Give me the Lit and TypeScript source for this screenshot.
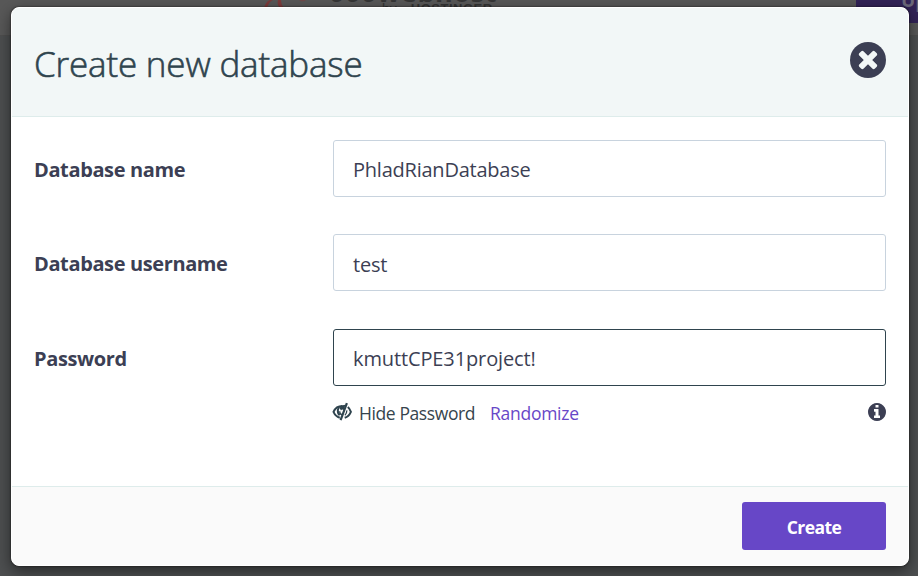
import { LitElement, html, css } from "lit";
import { customElement } from "lit/decorators.js";

@customElement("app-root")
export class AppRoot extends LitElement {
  static styles = css`
    :host {
      display: block;
      position: relative;
      width: 918px;
      height: 576px;
      overflow: hidden;
      background: #4d4f50;
      font-family: "Open Sans", "Noto Sans", sans-serif;
      color: #36444d;
    }
    * { box-sizing: border-box; }
    .topbar {
      height: 36px;
      display: flex;
      justify-content: space-between;
      background: #585858;
      border-bottom: 1px solid #4e4e4e;
    }
    .brand { display: flex; margin-left: 264px; }
    .flame { display: block; width: 60px; height: 8px; }
    .words { position: relative; width: 200px; height: 8px; overflow: hidden; }
    .host {
      position: absolute; left: 5px; top: -24px;
      font: 700 27px/32px "Open Sans", sans-serif;
      letter-spacing: 0.6px;
      color: #363636;
      white-space: nowrap;
    }
    .by {
      position: absolute; left: 58px; top: 2px;
      display: flex;
      gap: 14px;
      font: 400 14px/14px "Liberation Sans", sans-serif;
      color: #333;
      white-space: nowrap;
    }
    .by b { font-size: 13px; letter-spacing: 0.5px; }
    .upgrade {
      width: 62px; height: 23px;
      overflow: hidden;
      background: #322357;
      color: #6b687a;
      font: 700 19px/20px "Open Sans", sans-serif;
      padding-left: 45px;
      white-space: nowrap;
    }
    .upgrade span { display: block; margin-top: -10px; }
    .modal {
      position: absolute;
      left: 11px; top: 7px;
      width: 898px; height: 559px;
      display: flex;
      flex-direction: column;
      border: 1px solid #fff;
      border-radius: 8px;
      background: #fff;
      overflow: hidden;
      box-shadow: 0 0 2px rgba(0, 0, 0, 0.7), 0 5px 15px rgba(0, 0, 0, 0.5);
    }
    header {
      height: 109px;
      flex: none;
      display: flex;
      justify-content: space-between;
      align-items: flex-start;
      padding: 34px 22px 0 22px;
      background: #f2f7f7;
      border-bottom: 1px solid #deeceb;
      border-radius: 7px 7px 0 0;
    }
    h1 {
      margin: -1px 0 0;
      font-size: 35px;
      line-height: 46px;
      font-weight: 300;
      letter-spacing: -0.18px;
      color: #2f444e;
      -webkit-text-stroke: 0.6px #2f444e;
      white-space: nowrap;
    }
    .close { display: block; width: 36px; height: 36px; }
    main { flex: 1; padding: 23px 22px 0; }
    .row {
      display: grid;
      grid-template-columns: 299px 553px;
      align-items: center;
      height: 57px;
      margin-bottom: 37px;
    }
    .row.second { margin-bottom: 38px; }
    .row.third { margin-bottom: 0; }
    label {
      font-size: 20px;
      line-height: 28px;
      font-weight: 700;
      letter-spacing: -0.38px;
      color: #3c3f54;
      white-space: nowrap;
      padding-top: 3px;
    }
    .field {
      height: 57px;
      border: 1px solid #c8d3de;
      border-radius: 3px;
      padding: 2px 19px 0;
      font-size: 20px;
      line-height: 54px;
      letter-spacing: -0.23px;
      color: #3c3f54;
      white-space: nowrap;
    }
    .second .field { padding-top: 3px; }
    .field.active { border-color: #2f444e; letter-spacing: -0.12px; }
    .tools {
      display: flex;
      align-items: center;
      margin-left: 298px;
      height: 24px;
      margin-top: 15px;
      font-size: 17.5px;
      line-height: 24px;
      letter-spacing: -0.4px;
      white-space: nowrap;
    }
    .eye { width: 20px; height: 20px; margin: -3px 7px 0 0; flex: none; overflow: visible; }
    .random { margin-left: 15px; color: #6747c7; letter-spacing: -0.28px; }
    .info { width: 18px; height: 18px; margin: -3px 0 0 auto; flex: none; }
    footer {
      flex: none;
      height: 79px;
      display: flex;
      justify-content: flex-end;
      padding: 15px 22px 0;
      border-top: 1px solid #deeceb;
      background: #fafafa;
      border-radius: 0 0 7px 7px;
    }
    button {
      width: 144px; height: 48px;
      border: 0;
      border-radius: 3px;
      padding: 2px 0 0;
      background: #6747c7;
      color: #fff;
      font: 700 17.5px/24px "Open Sans", sans-serif;
      letter-spacing: -0.55px;
    }
  `;

  render() {
    return html`
      <div class="topbar">
        <div class="brand">
          <svg class="flame" viewBox="0 0 60 8">
            <path d="M0 8C1 4 3 1 6 0H9C5 2 4 5 3 8Z" fill="#7d3b3b" />
            <path d="M14 0h3c0 3 1 6 3 8h-4c-2-2-3-5-2-8Z" fill="#7d3b3b" />
            <path d="M35 0h7l-2 1.2h-3z" fill="#704848" />
          </svg>
          <div class="words">
            <span class="host">000webhost</span>
            <span class="by"><span>by</span><b>HOSTINGER</b></span>
          </div>
        </div>
        <div class="upgrade"><span>Up</span></div>
      </div>
      <section class="modal">
        <header>
          <h1>Create new database</h1>
          <svg class="close" viewBox="0 0 36 36">
            <circle cx="18" cy="18" r="18" fill="#3c3f54" />
            <path
              transform="translate(18 18) scale(.0155) translate(-896 -960)"
              fill="#f2f7f7"
              d="M1490 1322q0 40-28 68l-136 136q-28 28-68 28t-68-28l-294-294-294 294q-28 28-68 28t-68-28l-136-136q-28-28-28-68t28-68l294-294-294-294q-28-28-28-68t28-68l136-136q28-28 68-28t68 28l294 294 294-294q28-28 68-28t68 28l136 136q28 28 28 68t-28 68l-294 294 294 294q28 28 28 68z"
            />
          </svg>
        </header>
        <main>
          <div class="row"><label>Database name</label><div class="field">PhladRianDatabase</div></div>
          <div class="row second"><label>Database username</label><div class="field">test</div></div>
          <div class="row third"><label>Password</label><div class="field active">kmuttCPE31project!</div></div>
          <div class="tools">
            <svg class="eye" viewBox="0 0 20 20" fill="none" stroke="#2f444e">
              <path d="M10.400 3.900C5.900 3.900 3 6.400 1.500 9.800C2.700 12.500 4.700 14.700 7.800 15.700" stroke-width="2" />
              <path d="M6.200 4.900C4.300 7 4.300 11.400 7 14L8.400 12.200C6.300 10 6.300 7.300 8.300 5.200Z" fill="#2f444e" stroke="none" />
              <path d="M14.900 1.200L8.600 18.200" stroke-width="2.200" />
              <path d="M13.400 2.800L11.600 8.600C11 7.200 9.800 7.200 9 8.500L7.600 6L9.200 3.600Z" fill="#2f444e" stroke="none" />
              <path d="M7.700 9.200C7.700 11 8.700 12.400 10 12.700" stroke-width="1.300" />
              <path d="M15.800 5.100C17.300 6.400 18.200 8 18.900 9.800C17.700 12.600 15.700 14.800 12.700 15.800" stroke-width="2" />
              <path d="M14.800 8.400C14.900 10.600 14.200 12 12.900 13.200" stroke-width="1.300" />
            </svg>
            <span>Hide Password</span>
            <span class="random">Randomize</span>
            <svg class="info" viewBox="128 128 1536 1536">
              <path
                fill="#3c3f54"
                d="M1152 1376v-160q0-14-9-23t-23-9h-96v-512q0-14-9-23t-23-9h-320q-14 0-23 9t-9 23v160q0 14 9 23t23 9h96v320h-96q-14 0-23 9t-9 23v160q0 14 9 23t23 9h448q14 0 23-9t9-23zm-128-896v-160q0-14-9-23t-23-9h-192q-14 0-23 9t-9 23v160q0 14 9 23t23 9h192q14 0 23-9t9-23zm640 416q0 209-103 385.500t-279.500 279.500-385.500 103-385.500-103-279.500-279.500-103-385.500 103-385.500 279.500-279.500 385.500-103 385.500 103 279.500 279.500 103 385.500z"
              />
            </svg>
          </div>
        </main>
        <footer><button>Create</button></footer>
      </section>
    `;
  }
}
